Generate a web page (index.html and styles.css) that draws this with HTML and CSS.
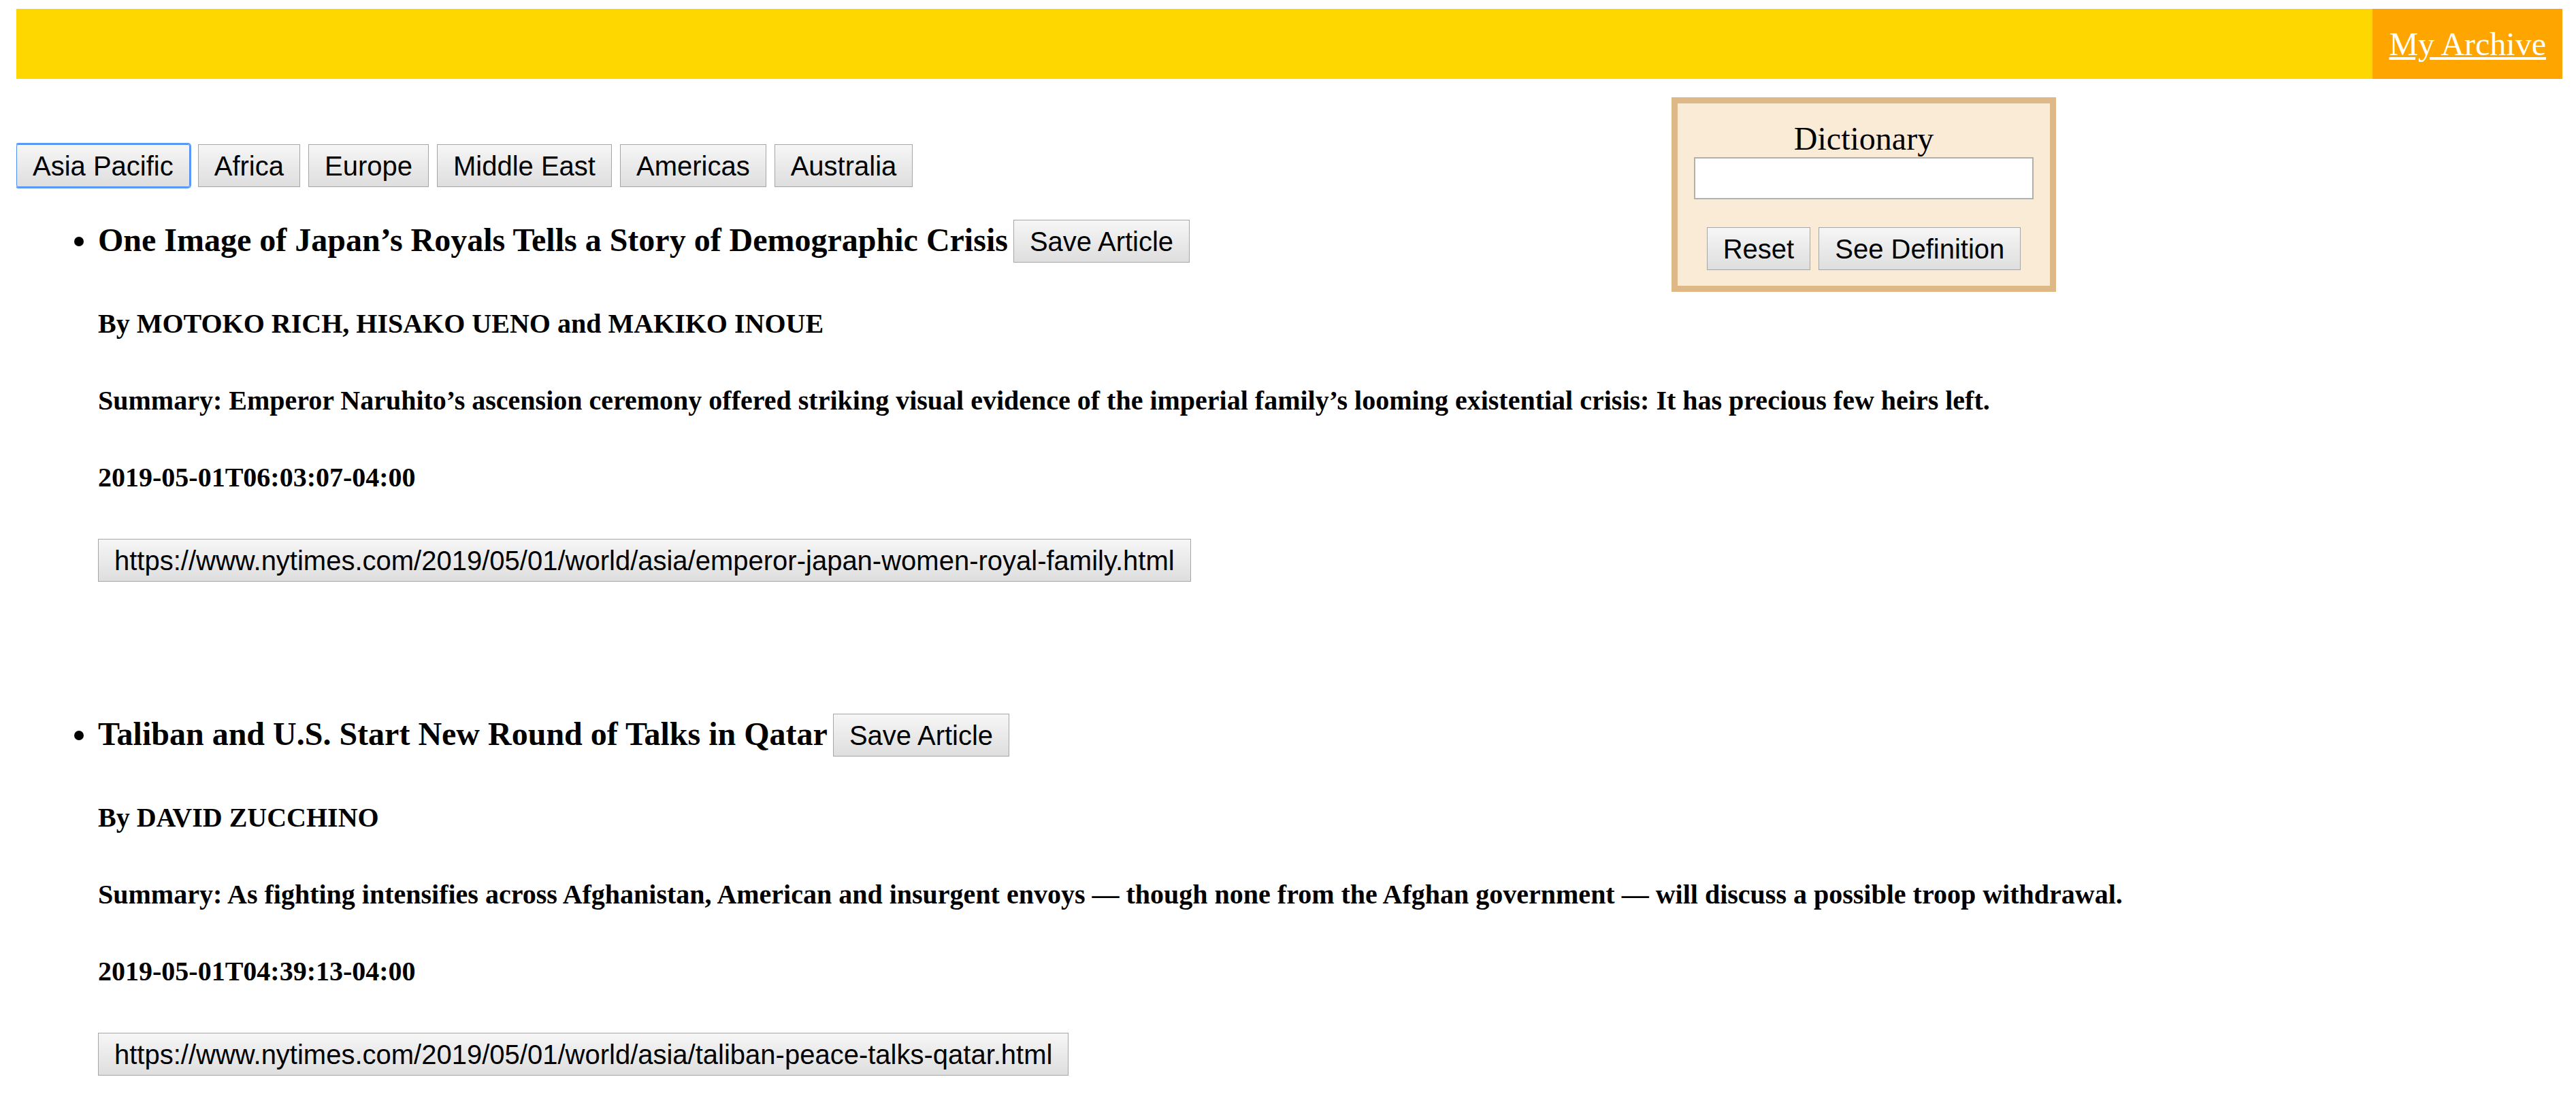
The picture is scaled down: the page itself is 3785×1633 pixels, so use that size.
FILE: index.html
```html
<!DOCTYPE html>
<html lang="en">
<head>
<meta charset="utf-8">
<title>News</title>
<link rel="stylesheet" href="styles.css">
</head>
<body>
<header class="topbar">
  <a class="archive-link" href="#">My Archive</a>
</header>

<aside class="dictionary">
  <div class="dict-title">Dictionary</div>
  <input class="dict-input" type="text">
  <div class="dict-actions">
    <button class="btn">Reset</button>
    <button class="btn">See Definition</button>
  </div>
</aside>

<nav class="tabs">
  <button class="btn tab active">Asia Pacific</button>
  <button class="btn tab">Africa</button>
  <button class="btn tab">Europe</button>
  <button class="btn tab">Middle East</button>
  <button class="btn tab">Americas</button>
  <button class="btn tab">Australia</button>
</nav>

<ul class="articles">
  <li class="article">
    <div class="title-row"><span class="title">One Image of Japan’s Royals Tells a Story of Demographic Crisis</span><button class="btn save">Save Article</button></div>
    <p class="meta byline">By MOTOKO RICH, HISAKO UENO and MAKIKO INOUE</p>
    <p class="meta">Summary: Emperor Naruhito’s ascension ceremony offered striking visual evidence of the imperial family’s looming existential crisis: It has precious few heirs left.</p>
    <p class="meta">2019-05-01T06:03:07-04:00</p>
    <button class="btn url">https://www.nytimes.com/2019/05/01/world/asia/emperor-japan-women-royal-family.html</button>
  </li>
  <li class="article">
    <div class="title-row"><span class="title">Taliban and U.S. Start New Round of Talks in Qatar</span><button class="btn save">Save Article</button></div>
    <p class="meta byline">By DAVID ZUCCHINO</p>
    <p class="meta">Summary: As fighting intensifies across Afghanistan, American and insurgent envoys — though none from the Afghan government — will discuss a possible troop withdrawal.</p>
    <p class="meta">2019-05-01T04:39:13-04:00</p>
    <button class="btn url">https://www.nytimes.com/2019/05/01/world/asia/taliban-peace-talks-qatar.html</button>
  </li>
</ul>
</body>
</html>
```

FILE: styles.css
```css
html, body {
  background: #ffffff;
}

body {
  margin: 13px 20px 0 24px;
  font-family: "Liberation Serif", "Times New Roman", serif;
  font-size: 48px;
  color: #000000;
}

.topbar {
  display: flex;
  justify-content: flex-end;
  background: #ffd700;
}

.archive-link {
  display: block;
  background: #ffa500;
  color: #ffffff;
  padding: 24px;
  font-size: 48px;
  line-height: 55px;
  text-decoration: underline;
}

.btn {
  box-sizing: border-box;
  height: 63px;
  margin: 0;
  padding: 0 23px;
  font-family: "Liberation Sans", Arial, sans-serif;
  font-size: 40px;
  line-height: 46px;
  color: #000000;
  background: linear-gradient(#f6f6f6, #dedede);
  border: 1px solid #a6a6a6;
  border-radius: 0;
}

.tabs {
  display: flex;
  gap: 12px;
  margin-top: 96px;
}

.tab.active {
  border-color: #4d8ff0;
  border-radius: 3px;
  box-shadow: 0 0 0 2px #5e9bf5;
}

.dictionary {
  position: absolute;
  left: 2456px;
  top: 143px;
  box-sizing: border-box;
  width: 565px;
  border: 9px solid #deb887;
  background: #faebd7;
  padding: 24px 24px 23px;
}

.dict-title {
  text-align: center;
  font-size: 48px;
  line-height: 55px;
}

.dict-input {
  display: block;
  box-sizing: border-box;
  width: 499px;
  height: 62px;
  margin: 0;
  padding: 3px 6px;
  font-family: "Liberation Sans", Arial, sans-serif;
  font-size: 40px;
  background: #ffffff;
  border: 2px solid #b0b0b0;
  border-radius: 0;
}

.dict-actions {
  display: flex;
  justify-content: center;
  gap: 12px;
  margin-top: 41px;
}

.articles {
  margin: 48px 0 0;
  padding-left: 120px;
}

.article + .article {
  margin-top: 194px;
}

.title {
  font-weight: bold;
  font-size: 48px;
}

.save {
  margin-left: 8px;
  vertical-align: baseline;
}

.meta {
  font-size: 40px;
  font-weight: bold;
  margin: 66px 0;
}

.meta + .url {
  margin-top: 67px;
}

.url {
  display: block;
}
```
